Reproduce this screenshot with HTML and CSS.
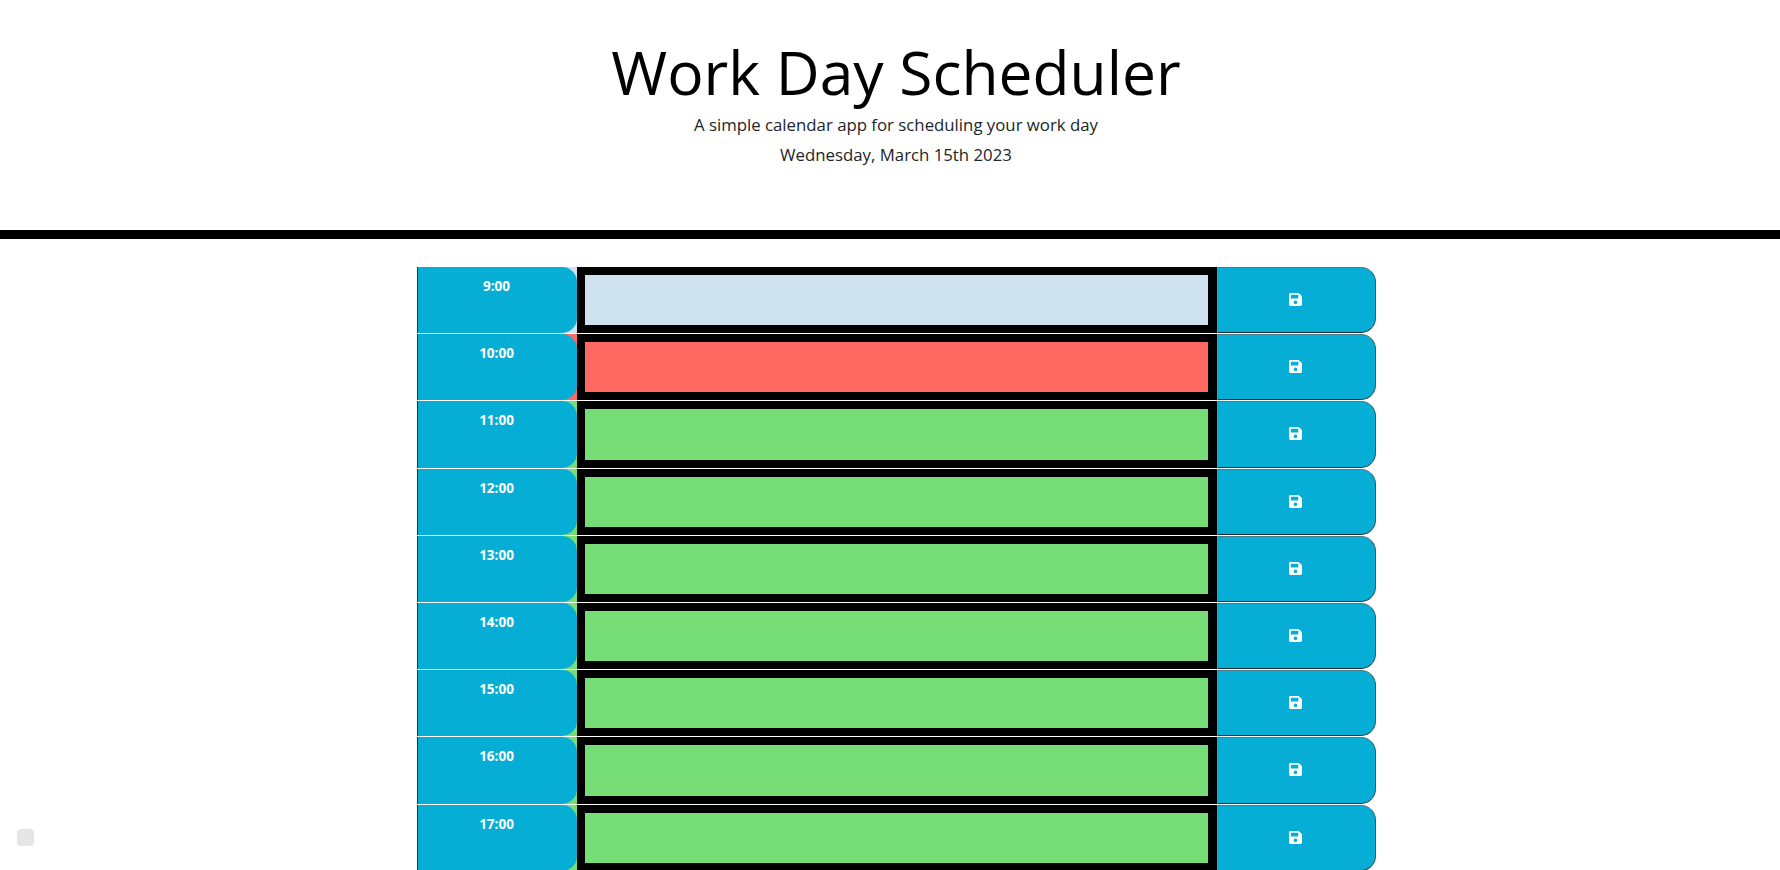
FILE: index.html
```html
<!DOCTYPE html>
<html lang="en">
<head>
    <meta charset="UTF-8">
    <meta name="viewport" content="width=device-width, initial-scale=1.0">
    <title>Work Day Scheduler</title>
    <link rel="stylesheet" href="styles.css">
</head>
<body>
    <svg class="icon-defs" aria-hidden="true">
        <symbol id="icon-save" viewBox="0 0 448 512">
            <path d="M433.941 129.941l-83.882-83.882A48 48 0 0 0 316.118 32H48C21.49 32 0 53.49 0 80v352c0 26.51 21.49 48 48 48h352c26.51 0 48-21.49 48-48V163.882a48 48 0 0 0-14.059-33.941zM224 416c-35.346 0-64-28.654-64-64 0-35.346 28.654-64 64-64s64 28.654 64 64c0 35.346-28.654 64-64 64zm96-304.52V212c0 6.627-5.373 12-12 12H76c-6.627 0-12-5.373-12-12V108c0-6.627 5.373-12 12-12h228.52c3.183 0 6.235 1.264 8.485 3.515l3.48 3.48A11.996 11.996 0 0 1 320 111.48z"/>
        </symbol>
    </svg>

    <header class="jumbotron">
        <h1>Work Day Scheduler</h1>
        <p class="lead">A simple calendar app for scheduling your work day</p>
        <p class="lead" id="currentDay">Wednesday, March 15th 2023</p>
    </header>

    <main class="schedule">
        <div class="time-block past">
            <div class="hour-cell"><div class="hour">9:00</div></div>
            <textarea class="description"></textarea>
            <button class="saveBtn"><svg class="save-icon"><use href="#icon-save"/></svg></button>
        </div>
        <div class="time-block present">
            <div class="hour-cell"><div class="hour">10:00</div></div>
            <textarea class="description"></textarea>
            <button class="saveBtn"><svg class="save-icon"><use href="#icon-save"/></svg></button>
        </div>
        <div class="time-block future">
            <div class="hour-cell"><div class="hour">11:00</div></div>
            <textarea class="description"></textarea>
            <button class="saveBtn"><svg class="save-icon"><use href="#icon-save"/></svg></button>
        </div>
        <div class="time-block future">
            <div class="hour-cell"><div class="hour">12:00</div></div>
            <textarea class="description"></textarea>
            <button class="saveBtn"><svg class="save-icon"><use href="#icon-save"/></svg></button>
        </div>
        <div class="time-block future">
            <div class="hour-cell"><div class="hour">13:00</div></div>
            <textarea class="description"></textarea>
            <button class="saveBtn"><svg class="save-icon"><use href="#icon-save"/></svg></button>
        </div>
        <div class="time-block future">
            <div class="hour-cell"><div class="hour">14:00</div></div>
            <textarea class="description"></textarea>
            <button class="saveBtn"><svg class="save-icon"><use href="#icon-save"/></svg></button>
        </div>
        <div class="time-block future">
            <div class="hour-cell"><div class="hour">15:00</div></div>
            <textarea class="description"></textarea>
            <button class="saveBtn"><svg class="save-icon"><use href="#icon-save"/></svg></button>
        </div>
        <div class="time-block future">
            <div class="hour-cell"><div class="hour">16:00</div></div>
            <textarea class="description"></textarea>
            <button class="saveBtn"><svg class="save-icon"><use href="#icon-save"/></svg></button>
        </div>
        <div class="time-block future">
            <div class="hour-cell"><div class="hour">17:00</div></div>
            <textarea class="description"></textarea>
            <button class="saveBtn"><svg class="save-icon"><use href="#icon-save"/></svg></button>
        </div>
    </main>

    <div class="corner-badge"></div>
</body>
</html>
```

FILE: styles.css
```css
/* Basic styles */
html, body {
    height: 870px;
    overflow: hidden;
}
body {
    font-family: "Open Sans", sans-serif;
    margin: 0;
    background-color: #fff;
    color: #212529;
}
.icon-defs {
    display: none;
}

/* Header */
.jumbotron {
    height: 230px;
    padding-left: 12px;
    text-align: center;
    border-bottom: 9px solid #000;
}
.jumbotron h1 {
    margin: 0;
    padding-top: 34px;
    font-size: 60.5px;
    font-weight: 400;
    line-height: 76px;
    color: #000;
}
.lead {
    margin: 0;
    font-size: 16.8px;
    font-weight: 400;
    line-height: 30px;
}

/* Time blocks */
.schedule {
    display: flex;
    flex-direction: column;
    gap: 1px;
    width: 959px;
    margin: 28px 0 0 417px;
}
.time-block {
    display: grid;
    grid-template-columns: 160px 640px 159px;
    height: 66.2px;
}
.past { --slot-color: #cde2ee; }
.present { --slot-color: #ff6961; }
.future { --slot-color: #77dd77; }

.hour-cell {
    background-color: var(--slot-color);
}
.hour {
    height: 100%;
    box-sizing: border-box;
    padding: 9px 2px 0 0;
    border-left: 1px solid #333;
    border-radius: 0 15px 15px 0;
    background-color: #06aed5;
    color: #fff;
    font-size: 13.5px;
    font-weight: 700;
    line-height: 20px;
    text-align: center;
}
.description {
    display: block;
    width: 100%;
    height: 100%;
    box-sizing: border-box;
    padding: 0;
    border: solid #000;
    border-width: 8px 9px 8px 8px;
    border-radius: 0;
    outline: none;
    resize: none;
    background-color: var(--slot-color);
}
.saveBtn {
    display: flex;
    align-items: center;
    justify-content: center;
    height: 100%;
    padding: 0 3px 1px 0;
    border: 1px solid;
    border-color: #4a7b8c #2c5a6b #1c2b30 #06aed5;
    border-radius: 0 15px 15px 0;
    background-color: #06aed5;
    cursor: pointer;
}
.save-icon {
    width: 13px;
    height: 15px;
    fill: #fff;
}

/* Little grey square in the bottom left corner */
.corner-badge {
    position: fixed;
    left: 17px;
    top: 829px;
    width: 17px;
    height: 17px;
    border-radius: 4px;
    background-color: #e5e5e5;
}
```
